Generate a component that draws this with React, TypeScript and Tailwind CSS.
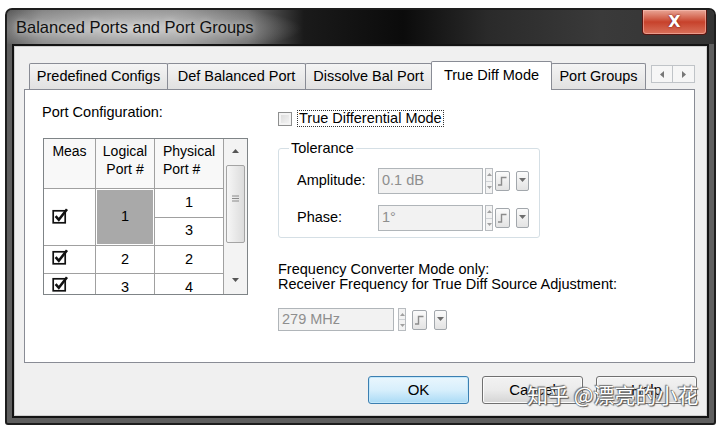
import React from "react";

const ui = "font-['Liberation_Sans',Arial,sans-serif] text-black";

function BoxCheck() {
  return (
    <svg width="17" height="17" viewBox="0 0 17 17">
      <rect x="1.2" y="3.8" width="12" height="12" fill="white" stroke="#111" strokeWidth="1.7" />
      <path d="M3.6 9.2 L6.8 12.8 L15 2.2" fill="none" stroke="#111" strokeWidth="2.6" />
    </svg>
  );
}

function Stepper({ cls }: { cls: string }) {
  return (
    <div className={`flex flex-col w-[8px] border border-[#b8bcc0] bg-[#f3f3f3] ${cls}`}>
      <div className="flex-1 flex items-center justify-center border-b border-[#cfd2d5]">
        <svg width="5" height="3" viewBox="0 0 5 3">
          <path d="M0 3 L2.5 0 L5 3Z" fill="#a0a0a0" />
        </svg>
      </div>
      <div className="flex-1 flex items-center justify-center">
        <svg width="5" height="3" viewBox="0 0 5 3">
          <path d="M0 0 L2.5 3 L5 0Z" fill="#a0a0a0" />
        </svg>
      </div>
    </div>
  );
}

function StepButton() {
  return (
    <div className="w-[15px] h-[20px] border border-[#a2a7ac] rounded-[2px] bg-linear-to-b from-[#fbfbfb] to-[#e3e3e3] flex items-center justify-center">
      <svg width="11" height="12" viewBox="0 0 11 12">
        <path d="M1 10 H4.5 V2.5 H9.5" fill="none" stroke="#8c8c8c" strokeWidth="1.4" />
      </svg>
    </div>
  );
}

function DropButton() {
  return (
    <div className="w-[13px] h-[20px] border border-[#a2a7ac] rounded-[2px] bg-linear-to-b from-[#fbfbfb] to-[#e3e3e3] flex justify-center pt-[6px]">
      <svg width="7" height="4" viewBox="0 0 7 4">
        <path d="M0 0 H7 L3.5 4Z" fill="#6e6e6e" />
      </svg>
    </div>
  );
}

function Tab({ label, cls, active }: { label: string; cls: string; active?: boolean }) {
  if (active) {
    return (
      <div className={`relative z-10 -mb-px h-[29px] flex items-center justify-center bg-white border border-b-0 border-[#898c95] rounded-t-[2px] ${cls}`}>
        {label}
      </div>
    );
  }
  return (
    <div className={`h-[26px] flex items-center justify-center border border-b-0 border-[#898c95] rounded-t-[2px] bg-linear-to-b from-[#f4f4f4] to-[#e1e1e1] ${cls}`}>
      {label}
    </div>
  );
}

function PortGrid() {
  return (
    <div className="mt-[17px] ml-px w-[205px] h-[157px] border border-[#7f8487] bg-white flex overflow-hidden text-[14.5px]">
      <div className="w-[180px] shrink-0 flex flex-col">
        <div className="flex h-[50px] shrink-0 border-b border-[#a0a0a0] bg-[#f8f8f8] text-[14px] leading-[18px]">
          <div className="w-[52px] border-r border-[#a0a0a0] text-center pt-[3px]">Meas</div>
          <div className="w-[59px] border-r border-[#a0a0a0] text-center pt-[3px]">
            Logical
            <br />
            Port #
          </div>
          <div className="w-[69px] border-r border-[#a0a0a0] pl-[8px] pt-[3px]">
            Physical
            <br />
            Port #
          </div>
        </div>
        <div className="flex h-[57px] shrink-0 border-b border-[#a0a0a0]">
          <div className="w-[52px] border-r border-[#a0a0a0] flex items-center pl-[8px] pb-[4px]">
            <BoxCheck />
          </div>
          <div className="w-[59px] border-r border-[#a0a0a0] p-px">
            <div className="h-full bg-[#a9a9a9] flex items-center justify-center">1</div>
          </div>
          <div className="w-[69px] border-r border-[#a0a0a0] flex flex-col">
            <div className="flex-1 border-b border-[#a0a0a0] flex items-center justify-center">1</div>
            <div className="flex-1 flex items-center justify-center">3</div>
          </div>
        </div>
        <div className="flex h-[28px] shrink-0 border-b border-[#a0a0a0]">
          <div className="w-[52px] border-r border-[#a0a0a0] flex items-start pt-[2px] pl-[8px]">
            <BoxCheck />
          </div>
          <div className="w-[59px] border-r border-[#a0a0a0] flex items-center justify-center">2</div>
          <div className="w-[69px] border-r border-[#a0a0a0] flex items-center justify-center">2</div>
        </div>
        <div className="flex h-[28px] shrink-0 border-b border-[#a0a0a0]">
          <div className="w-[52px] border-r border-[#a0a0a0] flex items-start pt-[1px] pl-[8px]">
            <BoxCheck />
          </div>
          <div className="w-[59px] border-r border-[#a0a0a0] flex items-start pt-[3px] justify-center">3</div>
          <div className="w-[69px] border-r border-[#a0a0a0] flex items-start pt-[3px] justify-center">4</div>
        </div>
      </div>
      <div className="flex-1 bg-[#f3f3f3] flex flex-col items-center">
        <div className="h-[24px] flex items-center justify-center">
          <svg width="7" height="4" viewBox="0 0 7 4">
            <path d="M0 4 L3.5 0 L7 4Z" fill="#555" />
          </svg>
        </div>
        <div className="mt-[2px] w-[19px] h-[78px] rounded-[2px] border border-[#a4a4a4] bg-linear-to-r from-[#f6f6f6] to-[#dcdcdc] flex items-center justify-center pb-[12px]">
          <svg width="7" height="7" viewBox="0 0 7 7">
            <path d="M0 1 H7 M0 3.5 H7 M0 6 H7" stroke="#8a8a8a" strokeWidth="1" />
          </svg>
        </div>
        <div className="flex-1" />
        <div className="h-[18px] flex items-start justify-center pt-[2px]">
          <svg width="7" height="4" viewBox="0 0 7 4">
            <path d="M0 0 L3.5 4 L7 0Z" fill="#555" />
          </svg>
        </div>
      </div>
    </div>
  );
}

function ToleranceRow({ label, value, cls }: { label: string; value: string; cls: string }) {
  return (
    <div className={`flex items-center ${cls}`}>
      <div className="w-[81px]">{label}</div>
      <div className="w-[105px] h-[26px] border border-[#b0b5b9] bg-[#f2f2f2] text-[#8e8e8e] flex items-center pl-[3px]">
        {value}
      </div>
      <Stepper cls="ml-[2px] h-[26px]" />
      <div className="ml-[2px]">
        <StepButton />
      </div>
      <div className="ml-[6px]">
        <DropButton />
      </div>
    </div>
  );
}

function WinButton({ label, primary }: { label: string; primary?: boolean }) {
  if (primary) {
    return (
      <div className="w-[101px] h-[28px] rounded-[3px] border border-[#3c7fb1] bg-linear-to-b from-[#eaf6fd] via-[#d7effc] to-[#a9daf5] shadow-[inset_0_0_0_1px_#c3e8fb] flex items-center justify-center text-[15px]">
        {label}
      </div>
    );
  }
  return (
    <div className="w-[101px] h-[28px] rounded-[3px] border border-[#707070] bg-linear-to-b from-[#f2f2f2] via-[#ebebeb] to-[#d4d4d4] shadow-[inset_0_0_0_1px_#fbfbfb] flex items-center justify-center text-[15px]">
      {label}
    </div>
  );
}

export default function App() {
  return (
    <div className={`relative w-[720px] h-[428px] bg-white overflow-hidden pt-[8px] pl-[5px] ${ui}`}>
      <div className="relative w-[711px] h-[417px] border-2 border-[#1e1e1e] rounded-t-[7px] rounded-b-[3px] bg-[#5f5f5f] flex flex-col">
        {/* title bar */}
        <div className="h-[34px] shrink-0 rounded-t-[5px] flex items-center pl-[9px] bg-[radial-gradient(ellipse_170px_26px_at_125px_55%,rgba(215,215,215,0.85),transparent),linear-gradient(90deg,#5a5a5a_0%,#7d7d7d_5%,#888_24%,#6c6c6c_34%,#1a1a1a_42%,#0b0b0b_56%,#2a2a2a_68%,#3a3a3a_84%,#343434_100%)]">
          <span className="text-[16.5px] text-[#111] [text-shadow:0_0_6px_rgba(255,255,255,0.7)]">
            Balanced Ports and Port Groups
          </span>
        </div>
        <div className="absolute top-0 right-[7px] w-[65px] h-[25px] rounded-b-[4px] border border-[#5a1510] border-t-0 bg-linear-to-b from-[#e8a596] via-[#c7412b] to-[#d8705a] shadow-[inset_0_0_0_1px_rgba(255,200,190,0.5)] flex items-center justify-center">
          <span className="text-white font-bold text-[16px] font-['DejaVu_Sans',sans-serif] [text-shadow:0_0_2px_#600]">X</span>
        </div>

        {/* client */}
        <div className="mx-[5px] mb-[5px] flex-1 border-2 border-[#141414]">
          <div className="h-full border border-[#cfcfcf] bg-[#f0f0f0] flex flex-col text-[14.5px]">
            {/* tabs */}
            <div className="mt-[14px] ml-[14px] h-[28px] flex items-end">
              <Tab label="Predefined Configs" cls="w-[139px]" />
              <Tab label="Def Balanced Port" cls="w-[139px] -ml-px" />
              <Tab label="Dissolve Bal Port" cls="w-[127px] -ml-px" />
              <Tab label="True Diff Mode" cls="w-[121px] -ml-px" active />
              <Tab label="Port Groups" cls="w-[95px] -ml-px" />
              <div className="ml-[5px] mb-[6px] flex h-[18px]">
                <div className="w-[22px] border border-[#c0c4c8] bg-[#f6f6f6] flex items-center justify-center">
                  <svg width="4" height="7" viewBox="0 0 4 7">
                    <path d="M4 0 L0 3.5 L4 7Z" fill="#777" />
                  </svg>
                </div>
                <div className="w-[22px] border border-l-0 border-[#c0c4c8] bg-[#f6f6f6] flex items-center justify-center">
                  <svg width="4" height="7" viewBox="0 0 4 7">
                    <path d="M0 0 L4 3.5 L0 7Z" fill="#777" />
                  </svg>
                </div>
              </div>
            </div>

            {/* panel */}
            <div className="ml-[9px] w-[671px] h-[274px] border border-[#898c95] bg-white flex">
              <div className="pl-[17px] pt-[14px] flex flex-col">
                <div className="leading-[17px]">Port Configuration:</div>
                <PortGrid />
              </div>

              <div className="ml-[30px] pt-[20px] flex flex-col">
                <div className="flex items-center h-[17px]">
                  <div className="w-[14px] h-[14px] border border-[#8e8f8f] bg-linear-to-br from-[#d8d8d8] to-[#f8f8f8] shadow-[inset_0_0_0_2px_#f4f4f4]" />
                  <div className="ml-[5px] border border-dotted border-[#333] px-px leading-[15px]">
                    True Differential Mode
                  </div>
                </div>

                <fieldset className="mt-[12px] w-[262px] h-[99px] border border-[#d5dfe5] rounded-[3px]">
                  <legend className="ml-[10px] px-[2px] leading-[18px]">Tolerance</legend>
                  <div className="pl-[18px]">
                    <ToleranceRow label="Amplitude:" value="0.1 dB" cls="mt-[11px]" />
                    <ToleranceRow label="Phase:" value="1°" cls="mt-[11px]" />
                  </div>
                </fieldset>

                <div className="mt-[24px] leading-[15px]">
                  Frequency Converter Mode only:
                  <br />
                  Receiver Frequency for True Diff Source Adjustment:
                </div>

                <div className="mt-[16px] flex items-center">
                  <div className="w-[116px] h-[23px] border border-[#b0b5b9] bg-[#f2f2f2] text-[#8e8e8e] flex items-center pl-[3px]">
                    279 MHz
                  </div>
                  <Stepper cls="ml-[4px] h-[23px]" />
                  <div className="ml-[6px]">
                    <StepButton />
                  </div>
                  <div className="ml-[7px]">
                    <DropButton />
                  </div>
                </div>
              </div>
            </div>

            {/* buttons */}
            <div className="mt-[13px] pr-[9px] flex justify-end gap-[13px]">
              <WinButton label="OK" primary />
              <WinButton label="Cancel" />
              <WinButton label="Help" />
            </div>
          </div>
        </div>
      </div>

      {/* watermark */}
      <div className="absolute left-[527px] top-[379px] text-[21px] text-white font-['Noto_Sans_CJK_SC',sans-serif] [text-shadow:0_0_1px_#444,1px_1px_1px_#555,-1px_-1px_1px_#777]">
        知乎 @漂亮的小花
      </div>
    </div>
  );
}
